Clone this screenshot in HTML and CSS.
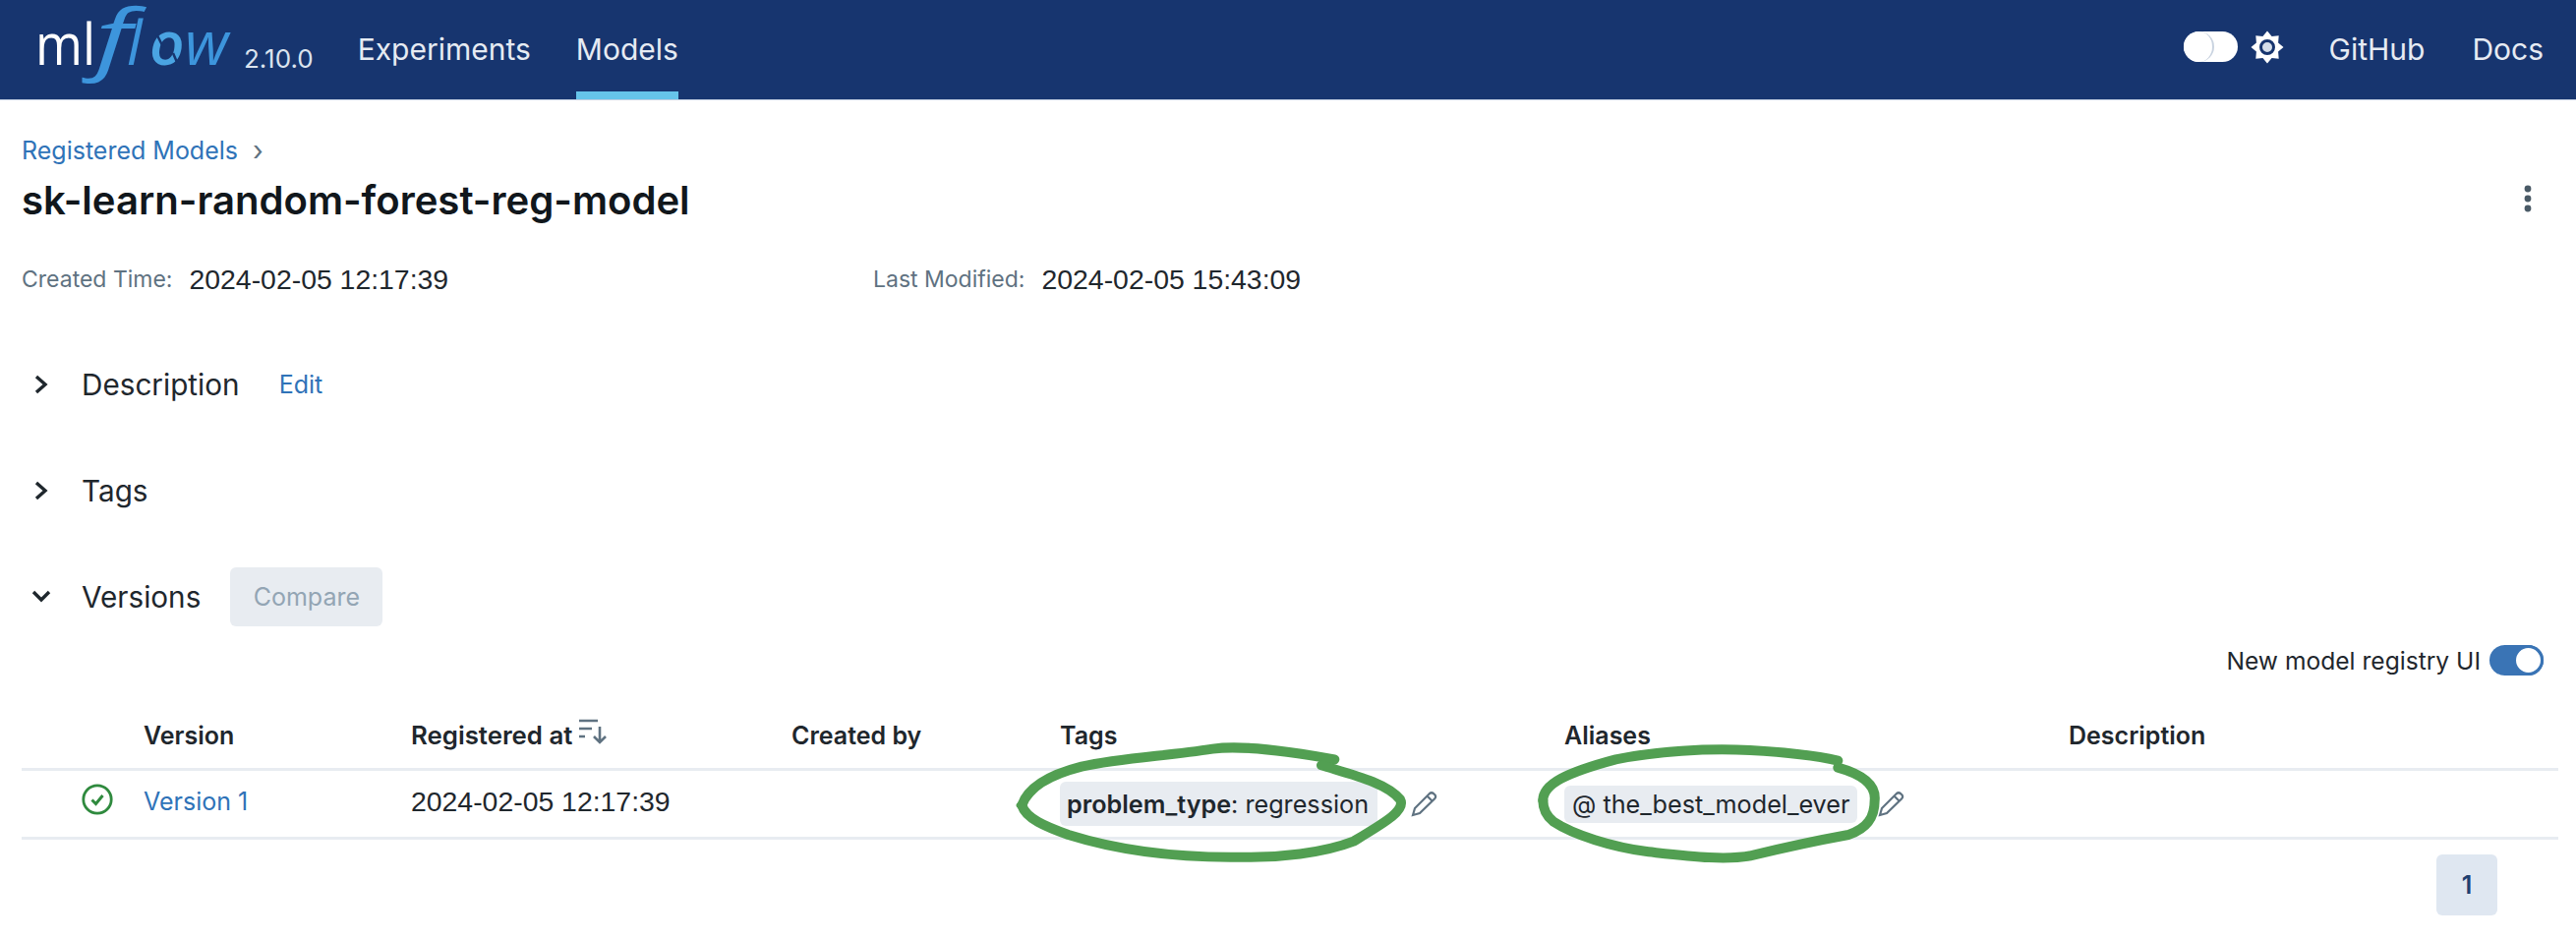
FILE: index.html
```html
<!DOCTYPE html>
<html lang="en">
<head>
<meta charset="utf-8">
<title>sk-learn-random-forest-reg-model - MLflow Model</title>
<link rel="stylesheet" href="styles.css">
</head>
<body>
<header class="topbar">
  <svg class="logo" viewBox="0 0 210 102" width="210" height="102" role="img" aria-label="mlflow">
    <text class="logo-word" y="66"><tspan class="logo-ml" x="0" textLength="61" lengthAdjust="spacingAndGlyphs">ml</tspan><tspan class="logo-f" x="61" textLength="37" lengthAdjust="spacingAndGlyphs">f</tspan><tspan class="logo-low" x="93">l</tspan><tspan class="logo-low logo-o" x="116">o</tspan><tspan class="logo-low" x="152">w</tspan></text>
    <path class="logo-gap" d="M124 36 L130 48 M140 54 L146 68"/>
  </svg>
  <span class="version-tag">2.10.0</span>
  <nav class="nav-left">
    <a class="nav-link">Experiments</a>
    <a class="nav-link nav-active">Models</a>
  </nav>
  <div class="nav-right">
    <span class="theme-switch"><span class="theme-knob"></span></span>
    <svg class="gear" viewBox="-17 -17 34 34" width="34" height="34">
      <polygon fill="#fff" points="0,-16.5 4.6,-11.1 11.7,-11.7 11.1,-4.6 16.5,0 11.1,4.6 11.7,11.7 4.6,11.1 0,16.5 -4.6,11.1 -11.7,11.7 -11.1,4.6 -16.5,0 -11.1,-4.6 -11.7,-11.7 -4.6,-11.1"/>
      <circle r="6.5" fill="#d5deea" stroke="#17356f" stroke-width="3"/>
    </svg>
    <a class="nav-link nav-github">GitHub</a>
    <a class="nav-link">Docs</a>
  </div>
</header>

<main class="page">
  <div class="breadcrumb"><a class="link">Registered Models</a><span class="crumb-sep">›</span></div>
  <div class="title-row">
    <h1 class="title">sk-learn-random-forest-reg-model</h1>
    <svg class="kebab" viewBox="0 0 8 30" width="8" height="30"><circle cx="4" cy="4" r="3.4"/><circle cx="4" cy="14" r="3.4"/><circle cx="4" cy="24" r="3.4"/></svg>
  </div>
  <div class="meta">
    <div class="meta-item meta-created"><span class="meta-label">Created Time:</span><span class="meta-value">2024-02-05 12:17:39</span></div>
    <div class="meta-item"><span class="meta-label">Last Modified:</span><span class="meta-value">2024-02-05 15:43:09</span></div>
  </div>

  <section class="section-head">
    <svg class="chev" viewBox="0 0 20 24" width="20" height="24"><path d="M5 4 L14 12 L5 20"/></svg>
    <h2 class="section-title">Description</h2>
    <a class="link edit-link">Edit</a>
  </section>
  <section class="section-head">
    <svg class="chev" viewBox="0 0 20 24" width="20" height="24"><path d="M5 4 L14 12 L5 20"/></svg>
    <h2 class="section-title">Tags</h2>
  </section>
  <section class="section-head">
    <svg class="chev" viewBox="0 0 20 24" width="20" height="24"><path d="M2 7 L10 15 L18 7"/></svg>
    <h2 class="section-title">Versions</h2>
    <button class="compare" disabled>Compare</button>
  </section>

  <div class="registry-toggle">
    <span>New model registry UI</span>
    <span class="ui-switch"><span class="ui-knob"></span></span>
  </div>

  <div class="table">
    <div class="row row-head">
      <div></div>
      <div>Version</div>
      <div class="sort-cell">Registered at
        <svg class="sort" viewBox="0 0 30 26" width="30" height="26"><path d="M1 2 H20 M1 10 H14 M1 18 H7 M22 8 V24 M16 18 L22 24 L28 18"/></svg>
      </div>
      <div>Created by</div>
      <div>Tags</div>
      <div>Aliases</div>
      <div>Description</div>
    </div>
    <div class="row row-body">
      <div class="status-cell">
        <svg viewBox="0 0 32 32" width="32" height="32"><circle cx="16" cy="16" r="14.2" class="ok-ring"/><path d="M10.5 16.5 L14.5 20.5 L21.5 12" class="ok-tick"/></svg>
      </div>
      <div class="cell-text"><a class="link">Version 1</a></div>
      <div class="cell-text cell-date">2024-02-05 12:17:39</div>
      <div></div>
      <div class="pill-cell">
        <span class="pill pill-tag"><b>problem_type</b>: regression</span>
        <svg class="pencil pencil-tag" viewBox="0 0 28 28" width="28" height="28"><path d="M3 25 L5 18 L20 3 Q22 1.500 24 3 L25.500 4.500 Q27 6.500 25 8.500 L10 23 Z M17.500 5.500 L22.500 10.500"/></svg>
      </div>
      <div class="pill-cell">
        <span class="pill pill-alias">@ the_best_model_ever</span>
        <svg class="pencil pencil-alias" viewBox="0 0 28 28" width="28" height="28"><path d="M3 25 L5 18 L20 3 Q22 1.500 24 3 L25.500 4.500 Q27 6.500 25 8.500 L10 23 Z M17.500 5.500 L22.500 10.500"/></svg>
      </div>
      <div></div>
    </div>

    <svg class="scribble scribble-tag" viewBox="0 0 1500 450" width="500" height="150">
      <path d="M118 240 C135 190 190 150 300 122 C420 95 560 90 700 68 C790 55 930 75 1072 100"/>
      <path d="M1032 118 C1120 145 1230 170 1272 222 C1290 255 1230 290 1130 350 C1040 385 900 402 780 398 C600 400 420 380 260 330 C190 305 130 280 118 240"/>
      <path class="thin" d="M110 240 L150 200 M110 240 L150 275"/>
    </svg>
    <svg class="scribble scribble-alias" viewBox="0 0 1500 450" width="500" height="150">
      <path d="M118 225 C118 175 190 140 340 100 C460 75 620 65 750 72 C860 78 950 88 1018 104"/>
      <path d="M1018 125 C1090 145 1135 175 1130 225 C1130 275 1110 310 1050 330 C940 350 850 370 760 392 C680 410 560 395 440 382 C330 368 210 330 150 290 C125 270 118 250 118 225"/>
    </svg>
  </div>

  <div class="pager"><span class="page-btn">1</span></div>
</main>
</body>
</html>
```

FILE: styles.css
```css
* { box-sizing: border-box; }
html, body { margin: 0; padding: 0; background: #fff; }
body {
  width: 2620px;
  height: 956px;
  overflow: hidden;
  font-family: Inter, "Liberation Sans", sans-serif;
  font-size: 26px;
  color: #1f272d;
}
a { text-decoration: none; }

.topbar {
  height: 102px;
  background: #17356f;
  display: flex;
  align-items: stretch;
  padding: 0 33px 0 36px;
  color: #e6ebf3;
  border-bottom: 1px solid #c5d0e2;
}
.logo { flex: none; width: 210px; }
.logo-word { font-family: "Open Sans", sans-serif; }
.logo-ml { font-size: 58px; font-weight: 500; fill: #fff; }
.logo-f { font-size: 78px; font-style: italic; font-weight: 500; fill: #3d95dc; }
.logo-low { font-size: 62px; font-style: italic; font-weight: 500; fill: #3d95dc; }
.logo-word .logo-o { fill: #4aa4e2; font-weight: 600; }
.logo-gap { fill: none; stroke: #17356f; stroke-width: 2.5; }
.version-tag {
  font-size: 26px;
  align-self: flex-end;
  line-height: 30px;
  padding-bottom: 26px;
  margin-left: 2px;
  color: #dbe3ee;
}
.nav-left { display: flex; gap: 46px; margin-left: 45px; }
.nav-link {
  display: flex;
  align-items: center;
  font-size: 30px;
  color: #e6ebf3;
  padding-bottom: 2px;
}
.nav-active { box-shadow: inset 0 -8px 0 #66c4ea; }
.nav-right { margin-left: auto; display: flex; align-items: center; }
.theme-switch {
  width: 55px;
  height: 31px;
  border-radius: 16px;
  background: #fff;
  margin-bottom: 6px;
  display: block;
}
.theme-knob {
  display: block;
  width: 31px;
  height: 31px;
  border-radius: 50%;
  background: #fff;
  border-right: 2px solid #c9d3e0;
}
.gear { margin: 0 0 6px 13px; }
.nav-github { margin: 0 48px 0 46px; }

.page { padding: 32px 18px 0 22px; }
.breadcrumb { display: flex; align-items: center; height: 38px; font-size: 25px; }
.crumb-sep { margin-left: 15px; color: #5f7281; font-size: 28px; line-height: 30px; }
.link { color: #2f73b8; }
.title-row { display: flex; align-items: center; justify-content: space-between; height: 56px; margin-top: 3px; padding-right: 27px; }
.title { margin: 0; font-size: 40.1px; font-weight: 600; color: #11171c; }
.kebab { fill: #4a5a66; }
.meta { display: flex; margin-top: 35px; height: 36px; align-items: center; }
.meta-item { display: flex; align-items: center; }
.meta-created { width: 866px; }
.meta-label { font-size: 23px; color: #5f7281; margin-right: 17px; }
.meta-value { font: 28.4px "Liberation Sans", sans-serif; color: #1f272d; }

.section-head { display: flex; align-items: center; height: 60px; margin-bottom: 48px; }
.meta + .section-head { margin-top: 59px; }
.section-head:last-of-type { margin-bottom: 0; }
.chev { width: 20px; margin-left: 10px; flex: none; fill: none; stroke: #1f272d; stroke-width: 3.4; }
.section-title { margin: 0 0 0 31px; font-size: 29.7px; font-weight: 400; color: #1f272d; }
.edit-link { margin-left: 40px; font-size: 25px; }
.compare {
  margin-left: 30px;
  width: 155px;
  height: 60px;
  border: 0;
  border-radius: 6px;
  background: #e8ecf1;
  color: #93a5b4;
  font: 400 25px Inter, sans-serif;
}

.registry-toggle {
  display: flex;
  justify-content: flex-end;
  align-items: center;
  gap: 9px;
  height: 31px;
  margin-top: 19px;
  padding-right: 15px;
  font-size: 24.6px;
}
.ui-switch { width: 55px; height: 31px; border-radius: 16px; background: #3a74b5; display: flex; justify-content: flex-end; }
.ui-knob { width: 31px; height: 31px; border-radius: 50%; background: #fff; border: 3px solid #3a74b5; }

.table { position: relative; }
.row { display: grid; grid-template-columns: 124px 272px 387px 273px 513px 513px 1fr; }
.row-head {
  height: 97px;
  padding-top: 43px;
  font-size: 25px;
  font-weight: 600;
  color: #1f272d;
  border-bottom: 3px solid #e8ecf1;
  line-height: 36px;
}
.sort-cell { display: flex; align-items: flex-start; gap: 6px; height: 36px; font-size: 25.8px; }
.sort { fill: none; stroke: #5f7281; stroke-width: 2.6; margin-top: 1px; }
.row-body {
  height: 70px;
  align-items: center;
  border-bottom: 3px solid #e8ecf1;
  font-size: 25px;
}
.cell-text { margin-top: -5px; }
.cell-date { font: 28.4px "Liberation Sans", sans-serif; }
.status-cell { display: flex; justify-content: flex-end; padding-right: 31px; margin-top: -9px; }
.ok-ring { fill: none; stroke: #2f8a3e; stroke-width: 2.8; }
.ok-tick { fill: none; stroke: #2f8a3e; stroke-width: 3; }
.pill-cell { display: flex; align-items: center; }
.pill { display: flex; align-items: center; border-radius: 6px; background: #e8ecf1; white-space: pre; font-size: 25.2px; }
.pill b { font-weight: 600; }
.pill-tag { width: 323px; height: 45px; padding-left: 7px; }
.pill-alias { width: 298px; height: 38px; padding-left: 8px; }
.pencil { fill: none; stroke: #5f7281; stroke-width: 2.2; flex: none; }
.pencil-tag { margin-left: 33px; }
.pencil-alias { margin-left: 20px; }
.scribble { position: absolute; top: 52px; fill: none; }
.scribble path { fill: none; stroke: #529f52; stroke-width: 30; stroke-linecap: round; stroke-linejoin: round; }
.scribble path.thin { stroke-width: 18; }
.scribble-tag { left: 978px; }
.scribble-alias { left: 1508px; }

.pager { display: flex; justify-content: flex-end; padding: 15px 62px 0 0; }
.page-btn {
  width: 62px;
  height: 62px;
  border-radius: 6px;
  background: #dfe7f1;
  color: #1f4070;
  font-weight: 600;
  font-size: 25px;
  display: flex;
  align-items: center;
  justify-content: center;
}
```
